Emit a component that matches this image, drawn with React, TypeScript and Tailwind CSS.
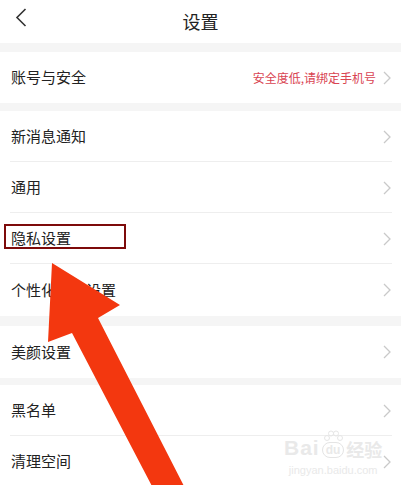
import React from 'react'

const font = { fontFamily: '"Noto Sans CJK SC", "Noto Sans", sans-serif' }
const latin = { fontFamily: '"Liberation Sans", sans-serif' }

function Chevron() {
    return (
        <svg width="8" height="14" viewBox="0 0 8 14" className="shrink-0">
            <path d="M1 1 L7 7 L1 13" fill="none" stroke="#c9c9c9" strokeWidth="1.3" />
        </svg>
    )
}

function Row({ label, extra, divider = true, h = 'h-[51px]' }: { label: string; extra?: string; divider?: boolean; h?: string }) {
    return (
        <div className={`relative flex items-center justify-between bg-white pl-[11px] pr-[10px] ${h}`}>
            <span className="text-[15px] text-[#222]">{label}</span>
            <div className="flex items-center gap-[7px]">
                {extra && <span className="text-[12px] text-[#d94452]">{extra}</span>}
                <Chevron />
            </div>
            {divider && <div className="absolute bottom-0 left-[10px] right-[9px] h-px bg-[#eeeeee]" />}
        </div>
    )
}

export default function App() {
    return (
        <div className="relative w-[401px] h-[485px] overflow-hidden bg-[#f5f5f5]" style={font}>
            {/* header */}
            <div className="relative flex items-center justify-center h-[43px] bg-white">
                <svg width="12" height="19" viewBox="0 0 12 19" className="absolute left-[15px] top-[8px]">
                    <path d="M10.5 1 L2 9.5 L10.5 18" fill="none" stroke="#333" strokeWidth="1.6" />
                </svg>
                <span className="text-[18px] text-[#222]">设置</span>
            </div>

            <div className="mt-[9px]">
                <Row label="账号与安全" extra="安全度低,请绑定手机号" divider={false} />
            </div>

            <div className="mt-[8px]">
                <Row label="新消息通知" />
                <Row label="通用" />
                <Row label="隐私设置" />
                <Row label="个性化推荐设置" divider={false} h="h-[52px]" />
            </div>

            <div className="mt-[10px]">
                <Row label="美颜设置" divider={false} h="h-[52px]" />
            </div>

            <div className="mt-[7px]">
                <Row label="黑名单" />
                <Row label="清理空间" divider={false} />
            </div>

            {/* watermark */}
            <div className="absolute left-[284px] top-[430px] flex flex-col items-center text-[#e9e9e9] leading-none">
                <div className="flex items-end gap-[2px]">
                    <span className="text-[21px] font-bold tracking-[1px]" style={latin}>Bai</span>
                    <div className="relative flex flex-col items-center">
                        <svg width="20" height="12" viewBox="0 0 20 12">
                            <circle cx="4" cy="8" r="2.5" fill="none" stroke="#e6e6e6" />
                            <circle cx="8" cy="3.5" r="2.5" fill="none" stroke="#e6e6e6" />
                            <circle cx="13" cy="3.5" r="2.5" fill="none" stroke="#e6e6e6" />
                            <circle cx="17" cy="8" r="2.5" fill="none" stroke="#e6e6e6" />
                        </svg>
                        <span className="rounded-full border border-[#e4e4e4] px-[3px] py-[1px] text-[12px] font-bold" style={latin}>du</span>
                    </div>
                    <span className="text-[18px] font-bold">经验</span>
                </div>
                <span className="mt-[7px] text-[11px]" style={latin}>jingyan.baidu.com</span>
            </div>

            {/* annotation box */}
            <div className="absolute left-[4px] top-[224px] w-[122px] h-[25px] border-2 border-[#7d0a0a]" />

            {/* annotation arrow */}
            <svg width="401" height="485" className="absolute left-0 top-0 pointer-events-none">
                <polygon points="52,263 120,305 98,318 186,490 154,490 72,333 48,342" fill="#f3370f" />
            </svg>
        </div>
    )
}
